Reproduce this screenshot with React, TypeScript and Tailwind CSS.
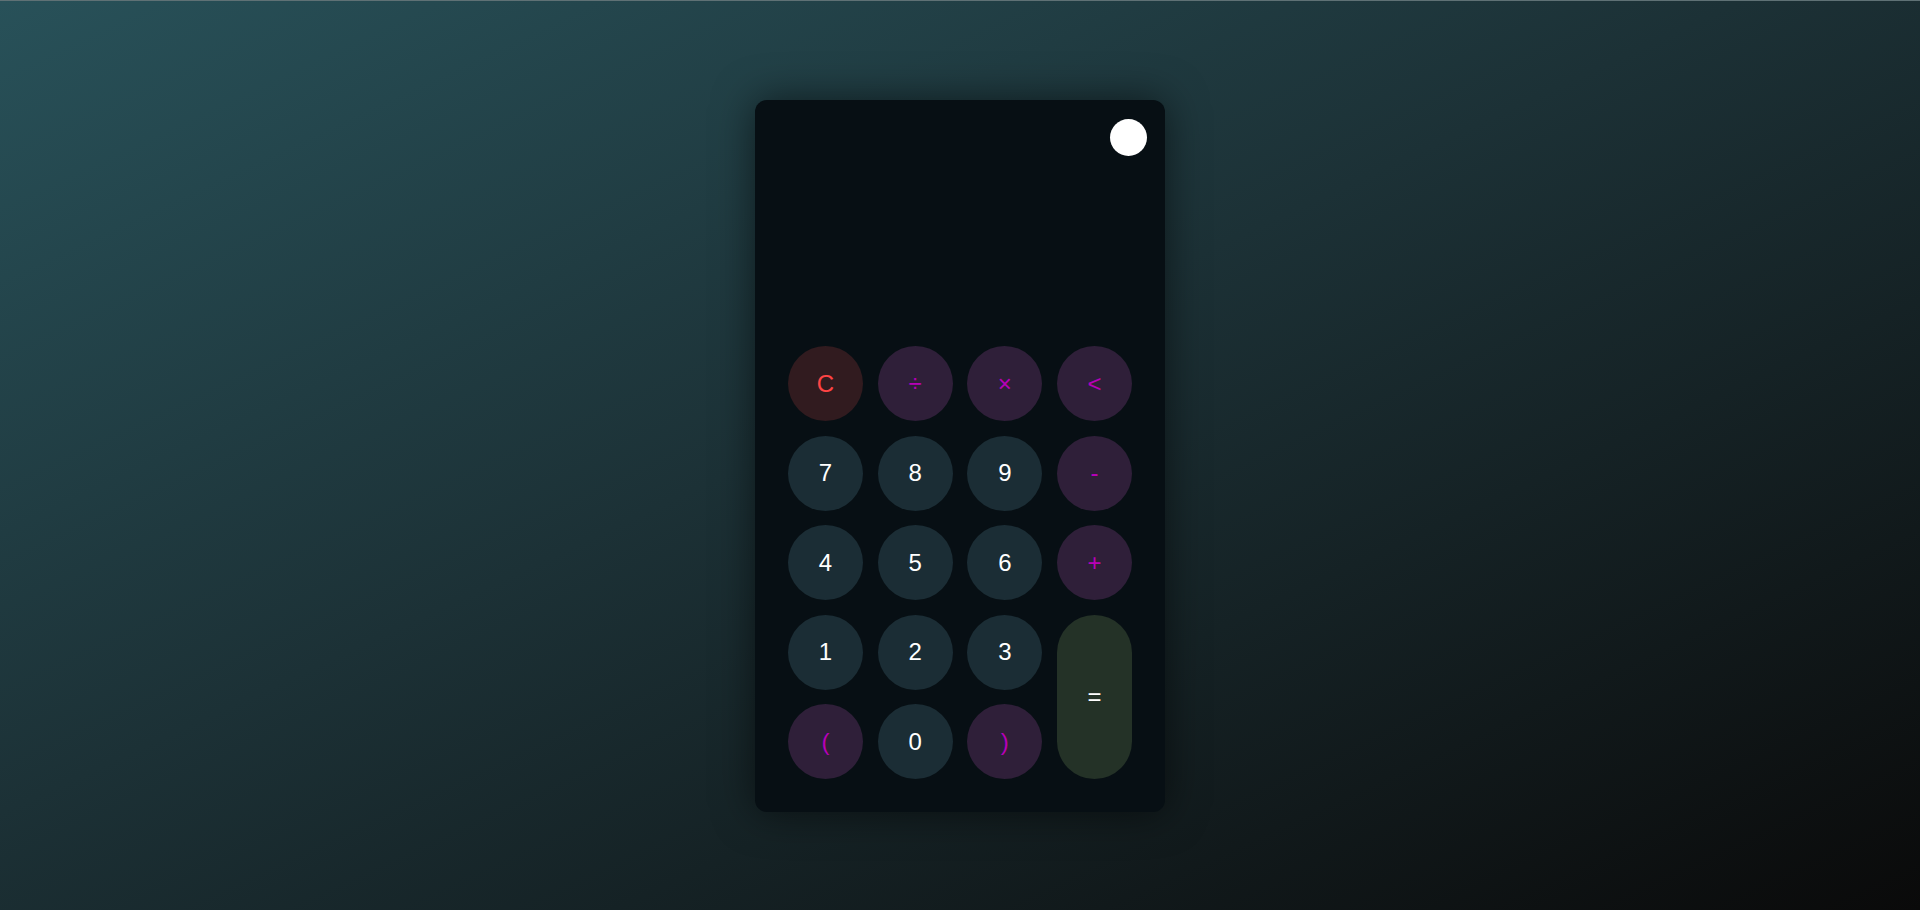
const keys: { label: string; kind: "num" | "op" | "clear" }[] = [
  { label: "C", kind: "clear" },
  { label: "÷", kind: "op" },
  { label: "×", kind: "op" },
  { label: "<", kind: "op" },
  { label: "7", kind: "num" },
  { label: "8", kind: "num" },
  { label: "9", kind: "num" },
  { label: "-", kind: "op" },
  { label: "4", kind: "num" },
  { label: "5", kind: "num" },
  { label: "6", kind: "num" },
  { label: "+", kind: "op" },
  { label: "1", kind: "num" },
  { label: "2", kind: "num" },
  { label: "3", kind: "num" },
];

const lastRow: { label: string; kind: "num" | "op" }[] = [
  { label: "(", kind: "op" },
  { label: "0", kind: "num" },
  { label: ")", kind: "op" },
];

const styles = {
  num: "bg-[#1b2d35] text-white",
  op: "bg-[#2f1f39] text-[#b800b8]",
  clear: "bg-[#311b1f] text-[#ff4444]",
};

export default function App() {
  return (
    <div className="min-h-[910px] w-full border-t border-[#5f7175] bg-[linear-gradient(155deg,#285159_0%,#1c3136_45%,#0a0a0a_100%)] flex justify-center font-['Liberation_Sans',Arial,sans-serif]">
      <div className="mt-[99px] w-[410px] h-[712px] rounded-xl bg-[#070f14] shadow-[0_0_40px_rgba(0,0,0,0.55)] px-[33px] pb-[33px] pt-[19px] flex flex-col">
        <div className="flex justify-end pr-[-15px]">
          <button className="w-[37px] h-[37px] rounded-full bg-white -mr-[15px]" />
        </div>
        <div className="flex-1" />
        <div className="grid grid-cols-4 gap-x-[14.67px] gap-y-[14.5px]">
          {keys.slice(0, 12).map((k) => (
            <button
              key={k.label}
              className={`h-[75px] w-[75px] rounded-full text-2xl flex items-center justify-center ${styles[k.kind]}`}
            >
              {k.label}
            </button>
          ))}
          {keys.slice(12).map((k) => (
            <button
              key={k.label}
              className={`h-[75px] w-[75px] rounded-full text-2xl flex items-center justify-center ${styles[k.kind]}`}
            >
              {k.label}
            </button>
          ))}
          <button className="row-span-2 w-[75px] h-full rounded-full bg-[#243227] text-white text-2xl flex items-center justify-center">
            =
          </button>
          {lastRow.map((k) => (
            <button
              key={k.label}
              className={`h-[75px] w-[75px] rounded-full text-2xl flex items-center justify-center ${styles[k.kind]}`}
            >
              {k.label}
            </button>
          ))}
        </div>
      </div>
    </div>
  );
}
